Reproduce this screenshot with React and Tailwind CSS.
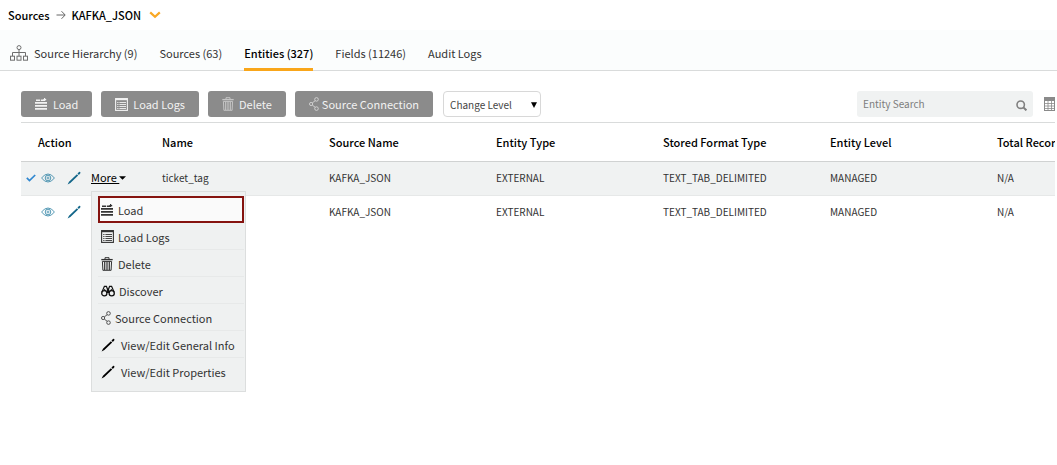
const FONT = 'font-["Noto_Sans_CJK_SC",sans-serif]';

function Hierarchy() {
  return (
    <svg viewBox="0 0 18 16" className="h-4 w-[18px] shrink-0" fill="none" stroke="#6f6f6f" aria-hidden="true">
      <circle cx="9" cy="2.6" r="2" />
      <path d="M9 4.6V11M2.5 11V7.5H15.5V11" />
      <rect x="0.5" y="11.2" width="4" height="4" />
      <rect x="7" y="11.2" width="4" height="4" />
      <rect x="13.5" y="11.2" width="4" height="4" />
    </svg>
  );
}

function LoadIcon({ className = "" }) {
  return (
    <svg viewBox="0 0 12 12" className={`size-3 shrink-0 ${className}`} fill="currentColor" aria-hidden="true">
      <path d="M1 1.4H5.2V3H1zM6 1.4H8.4V1H9V0H10.2V1H11.2V2.2H10.2V3H6z" />
      <path d="M0 4H12V5.8H0zM0 7H12V8.8H0zM0 10H12V11.8H0z" />
    </svg>
  );
}

function LogsIcon({ className = "" }) {
  return (
    <svg viewBox="0 0 13 13" className={`size-[13px] shrink-0 ${className}`} fill="none" stroke="currentColor" aria-hidden="true">
      <rect x="0.6" y="0.6" width="11.8" height="11.8" strokeWidth="1.1" />
      <path d="M0.6 1.3H12.4" strokeWidth="1.8" />
      <path d="M4.4 4.5H11M4.4 6.5H11M4.4 8.5H11M4.4 10.5H11M2.2 4.5H3.5M2.2 6.5H3.5M2.2 8.5H3.5M2.2 10.5H3.5" strokeWidth="0.9" />
    </svg>
  );
}

function TrashIcon({ className = "" }) {
  return (
    <svg viewBox="0 0 12 14" className={`h-3.5 w-3 shrink-0 ${className}`} fill="none" stroke="currentColor" aria-hidden="true">
      <path d="M0.3 2.6H11.7" strokeWidth="1.3" />
      <path d="M4 2.4V0.7H8V2.4M1.4 4.4H10.6L10.1 13.3H1.9z" />
      <path d="M3.7 4.5V13M6 4.5V13M8.3 4.5V13" strokeWidth="1.2" />
    </svg>
  );
}

function ShareIcon({ className = "" }) {
  return (
    <svg viewBox="0 0 10 14" className={`h-3.5 w-2.5 shrink-0 ${className}`} fill="none" stroke="currentColor" strokeWidth="0.9" aria-hidden="true">
      <circle cx="7.5" cy="2.4" r="1.8" />
      <circle cx="2.1" cy="7" r="1.6" />
      <circle cx="7.5" cy="11.6" r="1.8" />
      <path d="M3.3 5.9L6.2 3.7M3.3 8.1L6.2 10.3" />
    </svg>
  );
}

function Binoculars() {
  return (
    <svg viewBox="0 0 14 12" className="h-3 w-3.5 shrink-0" fill="none" stroke="#111" aria-hidden="true">
      <circle cx="3.3" cy="8.3" r="2.6" strokeWidth="1.3" />
      <circle cx="10.7" cy="8.3" r="2.6" strokeWidth="1.3" />
      <path d="M1 7L3.4 1.3H5.4L6.5 4.2V8M13 7L10.6 1.3H8.6L7.5 4.2V8" strokeWidth="1.2" />
      <path d="M6.3 4.4H7.7M6.3 7H7.7M3 4.4L5.6 6M11 4.4L8.4 6" />
    </svg>
  );
}

function Pencil({ className = "" }) {
  return (
    <svg viewBox="0 0 14 14" className={`size-3.5 shrink-0 ${className}`} aria-hidden="true">
      <path d="M0.6 13.4L2 10.7L9.9 3.2L11.2 4.5L3.4 12.1zM10.5 2.6L12 1.1Q12.7 0.6 13.2 1.1Q13.7 1.7 13.2 2.4L11.8 3.9z" fill="currentColor" />
    </svg>
  );
}

function Eye() {
  return (
    <svg viewBox="0 0 14 10" className="h-2.5 w-3.5 shrink-0" fill="none" stroke="#3f8cab" aria-hidden="true">
      <path d="M0.6 5Q3.4 1 7 1T13.4 5Q10.6 9 7 9T0.6 5z" strokeWidth="0.9" />
      <circle cx="7" cy="5" r="2.8" strokeWidth="0.9" />
      <circle cx="7" cy="5" r="1" strokeWidth="0.8" />
    </svg>
  );
}

const TABS = ["Source Hierarchy (9)", "Sources (63)", "Entities (327)", "Fields (11246)", "Audit Logs"];

const COLUMNS = ["Name", "Source Name", "Entity Type", "Stored Format Type", "Entity Level", "Total Records"];

const ROWS = [
  ["ticket_tag", "KAFKA_JSON", "EXTERNAL", "TEXT_TAB_DELIMITED", "MANAGED", "N/A"],
  ["", "KAFKA_JSON", "EXTERNAL", "TEXT_TAB_DELIMITED", "MANAGED", "N/A"],
];

const MENU = [
  { label: "Load", icon: <LoadIcon />, gap: "gap-[5px]" },
  { label: "Load Logs", icon: <LogsIcon />, gap: "gap-1" },
  { label: "Delete", icon: <TrashIcon />, gap: "gap-[5px]" },
  { label: "Discover", icon: <Binoculars />, gap: "gap-1" },
  { label: "Source Connection", icon: <ShareIcon className="text-[#444]" />, gap: "gap-1" },
  { label: "View/Edit General Info", icon: <Pencil className="text-black" />, gap: "gap-1.5" },
  { label: "View/Edit Properties", icon: <Pencil className="text-black" />, gap: "gap-1.5" },
];

const BUTTONS = [
  { label: "Load", icon: <LoadIcon />, gap: "gap-1.5" },
  { label: "Load Logs", icon: <LogsIcon />, gap: "gap-[5px]" },
  { label: "Delete", icon: <TrashIcon className="text-[#c4c4c4]" />, gap: "gap-[5px]" },
  { label: "Source Connection", icon: <ShareIcon className="text-[#d6d6d6]" />, gap: "gap-[3px]" },
];

function MoreMenu() {
  return (
    <div role="menu" className="absolute top-[29px] left-[70px] z-10 w-[155px] border border-[#dcdede] bg-[#eff1f1] pt-1 pr-px pb-1.5 pl-1.5">
      {MENU.map((item, i) => (
        <button
          key={item.label}
          type="button"
          role="menuitem"
          className={`flex h-[27px] w-full items-center border-b px-[3px] pt-0.5 text-left text-[11px] leading-4 whitespace-nowrap text-[#333] ${item.gap} ${
            i === 0
              ? "border-transparent bg-[#fafafa] outline-2 outline-[#85130f] -outline-offset-2"
              : i < MENU.length - 1
                ? "border-[#e7e9e9]"
                : "border-transparent"
          }`}
        >
          {item.icon}
          {item.label}
        </button>
      ))}
    </div>
  );
}

export default function App() {
  return (
    <div className={`flex min-h-screen flex-col overflow-hidden bg-white text-[#333] ${FONT}`}>
      <nav aria-label="Breadcrumb" className="flex h-[30px] items-center px-2 text-[11px] leading-4 font-medium text-black">
        <a href="#sources">Sources</a>
        <svg viewBox="0 0 10 10" className="mx-1.5 size-2.5" fill="none" stroke="#666" aria-hidden="true">
          <path d="M0.5 5H9M5.5 1.2L9.2 5L5.5 8.8" />
        </svg>
        <a href="#kafka">KAFKA_JSON</a>
        <button type="button" aria-label="Choose source" className="ml-2">
          <svg viewBox="0 0 12 8" className="h-2 w-3" fill="none" stroke="#f9a825" strokeWidth="2.2" aria-hidden="true">
            <path d="M1.2 1.4L6 5.8L10.8 1.4" />
          </svg>
        </button>
      </nav>

      <nav aria-label="Sections" className="flex h-[41px] items-stretch gap-[22px] border-b border-[#d9dbdb] bg-[#fbfdfd] pl-2.5 text-[11px] leading-4">
        {TABS.map((tab, i) => (
          <a
            key={tab}
            href={`#tab-${i}`}
            aria-current={i === 2 ? "page" : undefined}
            className={`-mb-px flex items-center gap-1.5 border-b-[3px] pt-2 whitespace-nowrap ${
              i === 2 ? "border-[#f9a61a] font-medium text-black" : "border-transparent"
            }`}
          >
            {i === 0 && <Hierarchy />}
            {tab}
          </a>
        ))}
      </nav>

      <main className="flex flex-1 flex-col pr-0.5 pl-[21px]">
        <div className="flex items-center pt-5 pb-[5px]">
          <div className="flex gap-[9px]">
            {BUTTONS.map((b) => (
              <button
                key={b.label}
                type="button"
                className={`flex h-[26px] items-center rounded-[3px] bg-[#8b8b8b] px-3.5 text-[11px] leading-4 whitespace-nowrap text-[#f2f2f2] ${b.gap}`}
              >
                {b.icon}
                {b.label}
              </button>
            ))}
          </div>
          <div className="relative ml-2.5 flex">
            <select aria-label="Change Level" className="h-[26px] w-[98px] appearance-none rounded border border-[#d8d8d8] bg-white pl-1.5 text-[10px] text-[#444]">
              <option>Change Level</option>
            </select>
            <svg viewBox="0 0 6 6" className="pointer-events-none absolute top-[11px] right-1 size-1.5" aria-hidden="true">
              <path d="M0 0.3H6L3 6z" fill="#000" />
            </svg>
          </div>
          <div className="ml-auto flex h-[26px] w-44 items-center rounded-[3px] bg-[#f0f2f2] px-1.5">
            <input type="text" aria-label="Entity Search" placeholder="Entity Search" className="min-w-0 flex-1 bg-transparent text-[10px] leading-4 outline-none placeholder:text-[#7d7d7d]" />
            <svg viewBox="0 0 11 11" className="mt-0.5 size-[11px]" fill="none" stroke="#808080" strokeWidth="1.6" aria-hidden="true">
              <circle cx="4.7" cy="4.7" r="3.7" />
              <path d="M7.4 7.4L10.4 10.4" strokeWidth="2" />
            </svg>
          </div>
          <button type="button" aria-label="Columns" className="ml-[11px]">
            <svg viewBox="0 0 11 14" className="h-3.5 w-[11px]" fill="none" stroke="#8a8a8a" aria-hidden="true">
              <rect x="0.5" y="0.5" width="10" height="13" />
              <path d="M0 2H11" strokeWidth="4" />
              <path d="M4 4V14M7.5 4V14M0 6.5H11M0 9H11M0 11.5H11" strokeWidth="0.8" />
            </svg>
          </button>
        </div>

        <div className="flex-1 overflow-hidden border-t border-[#d9dbdb]">
          <table className="w-[1143px] table-fixed border-collapse text-left">
            <thead>
              <tr className="h-[38px] border-b border-[#d0d2d2] text-[11px] leading-4 text-black">
                <th className="w-[141px] pl-[17px] font-medium">Action</th>
                {COLUMNS.map((c) => (
                  <th key={c} className="font-medium">{c}</th>
                ))}
              </tr>
            </thead>
            <tbody>
              {ROWS.map((row, r) => (
                <tr key={r} className={`h-[34px] text-[10px] leading-4 ${r === 0 ? "border-b border-[#e6e8e8] bg-[#f0f2f2]" : ""}`}>
                  <td className="relative">
                    <div className="flex items-center pl-[5px]">
                      <svg viewBox="0 0 10 8" className={`h-2 w-2.5 ${r === 0 ? "" : "invisible"}`} fill="none" stroke="#2f87d0" strokeWidth="1.7" aria-hidden="true">
                        <path d="M0.8 3.9L3.5 6.6L9.2 1" />
                      </svg>
                      <button type="button" aria-label="View" className="ml-[5px]"><Eye /></button>
                      <button type="button" aria-label="Edit" className="ml-3"><Pencil className="text-[#14678a]" /></button>
                      {r === 0 && (
                        <button type="button" aria-expanded="true" className="ml-2.5 flex items-center pb-0.5 text-[11px] leading-4 text-black">
                          <span className="underline underline-offset-1">More&nbsp;</span>
                          <svg viewBox="0 0 7 4" className="mt-0.5 h-1 w-[7px]" aria-hidden="true">
                            <path d="M0 0.2H7L3.5 3.8z" fill="#000" />
                          </svg>
                        </button>
                      )}
                    </div>
                    {r === 0 && <MoreMenu />}
                  </td>
                  {row.map((cell, c) => (
                    <td key={c} className="whitespace-nowrap">{cell}</td>
                  ))}
                </tr>
              ))}
            </tbody>
          </table>
        </div>
      </main>
    </div>
  );
}
